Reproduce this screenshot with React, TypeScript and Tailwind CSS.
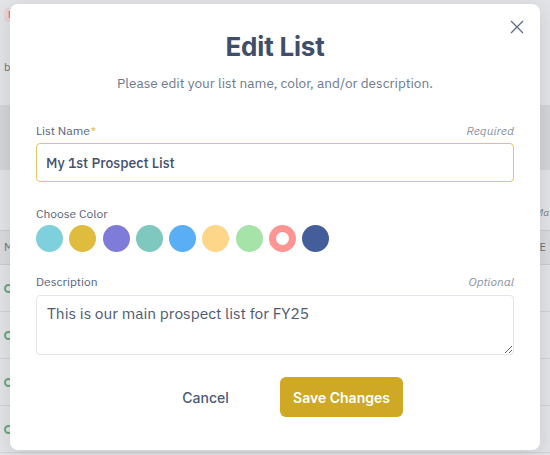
import { useState } from "react";

const colors = [
  "#7dd0dc",
  "#e0bc3e",
  "#7f7cd9",
  "#7ec8c0",
  "#5aaef5",
  "#fdd68a",
  "#a5e3a8",
  "#fe9593",
  "#435e9a",
];

function BackgroundPage() {
  return (
    <div className="w-[550px] h-[455px] bg-[#e3e4e7] flex flex-col">
      <div className="h-[30px] flex items-center px-1">
        <span className="text-[9px] text-[#8b6d72] bg-[#ecd3d6] px-1 rounded-sm">PE</span>
      </div>
      <div className="h-[75px] flex items-center px-1 text-[11px] text-[#6b7280]">by</div>
      <div className="h-[65px] bg-[#d3d5d9]" />
      <div className="h-[60px] flex items-end justify-end pb-[10px] pr-[1px] text-[10px] italic text-[#7b8190]">Ma</div>
      <div className="h-[35px] bg-[#d9dbdf] border-y border-[#c9ccd1] flex items-center justify-between px-1 text-[11px] text-[#6b7280]">
        <span>Ma</span>
        <span>E</span>
      </div>
      {[0, 1, 2, 3].map((i) => (
        <div key={i} className="h-[47px] border-b border-[#cfd2d6] flex items-center px-1">
          <span className="w-[9px] h-[9px] rounded-full border-2 border-[#6aa87a]" />
        </div>
      ))}
    </div>
  );
}

export default function App() {
  const [name, setName] = useState("My 1st Prospect List");
  const [desc, setDesc] = useState("This is our main prospect list for FY25");
  const [selected, setSelected] = useState(7);

  return (
    <div className="relative w-[550px] h-[455px] overflow-hidden" style={{ fontFamily: "'IBM Plex Sans', Roboto, sans-serif" }}>
      <BackgroundPage />

      {/* MODAL */}
      <div className="absolute inset-0 pl-[10px] pt-[4px]">
        <div className="relative w-[530px] h-[446px] bg-white rounded-lg shadow-[0_4px_20px_rgba(0,0,0,0.12)] px-[26px] pt-[28px]">
          <button className="absolute right-[16px] top-[16px] w-[14px] h-[14px] text-[#5d6c86]">
            <svg viewBox="0 0 14 14" width="14" height="14" fill="none" stroke="currentColor" strokeWidth="1.3">
              <path d="M1 1L13 13M13 1L1 13" />
            </svg>
          </button>

          <h2 className="text-center text-[26px] leading-[30px] font-bold text-[#3f4e6b] tracking-[-0.2px]" style={{ fontFamily: "Inter, sans-serif" }}>
            Edit List
          </h2>
          <p className="mt-[12px] text-center text-[13.6px] leading-[18px] text-[#6d7a8f]">
            Please edit your list name, color, and/or description.
          </p>

          {/* LIST NAME */}
          <div className="mt-[32px] flex justify-between items-end text-[12px] leading-[14px]">
            <span className="text-[#56627a]">
              List Name<span className="text-[#e0b93a] ml-[1px]">*</span>
            </span>
            <span className="italic text-[#8b94a5]">Required</span>
          </div>
          <input
            className="mt-[5px] w-full h-[39px] border border-[#e6c55c] rounded-[4px] px-[9px] text-[14px] font-medium text-[#44516b] outline-none"
            value={name}
            onChange={(e) => setName(e.target.value)}
          />

          {/* COLOR */}
          <div className="mt-[25px] text-[12px] leading-[14px] text-[#56627a]">Choose Color</div>
          <div className="mt-[4px] flex gap-[6.3px]">
            {colors.map((c, i) => (
              <button
                key={c}
                onClick={() => setSelected(i)}
                className="w-[27px] h-[27px] rounded-full flex items-center justify-center"
                style={{ backgroundColor: c }}
              >
                {selected === i && <span className="w-[13px] h-[13px] rounded-full bg-white" />}
              </button>
            ))}
          </div>

          {/* DESCRIPTION */}
          <div className="mt-[23px] flex justify-between items-end text-[12px] leading-[14px]">
            <span className="text-[#56627a]">Description</span>
            <span className="italic text-[#8b94a5]">Optional</span>
          </div>
          <textarea
            className="mt-[6px] w-full h-[60px] border border-[#e1e5ea] rounded-[4px] px-[10px] py-[7px] text-[15.5px] leading-[20px] text-[#4d5a72] outline-none resize-y block"
            value={desc}
            onChange={(e) => setDesc(e.target.value)}
          />

          {/* ACTIONS */}
          <div className="mt-[22px] flex justify-center gap-[16px]" style={{ fontFamily: "Inter, sans-serif" }}>
            <button className="w-[117px] h-[40px] text-[14px] font-medium text-[#4a5a78]">Cancel</button>
            <button className="w-[123px] h-[40px] rounded-[6px] bg-[#cfa826] text-white text-[14px] font-semibold">
              Save Changes
            </button>
          </div>
        </div>
      </div>
    </div>
  );
}
